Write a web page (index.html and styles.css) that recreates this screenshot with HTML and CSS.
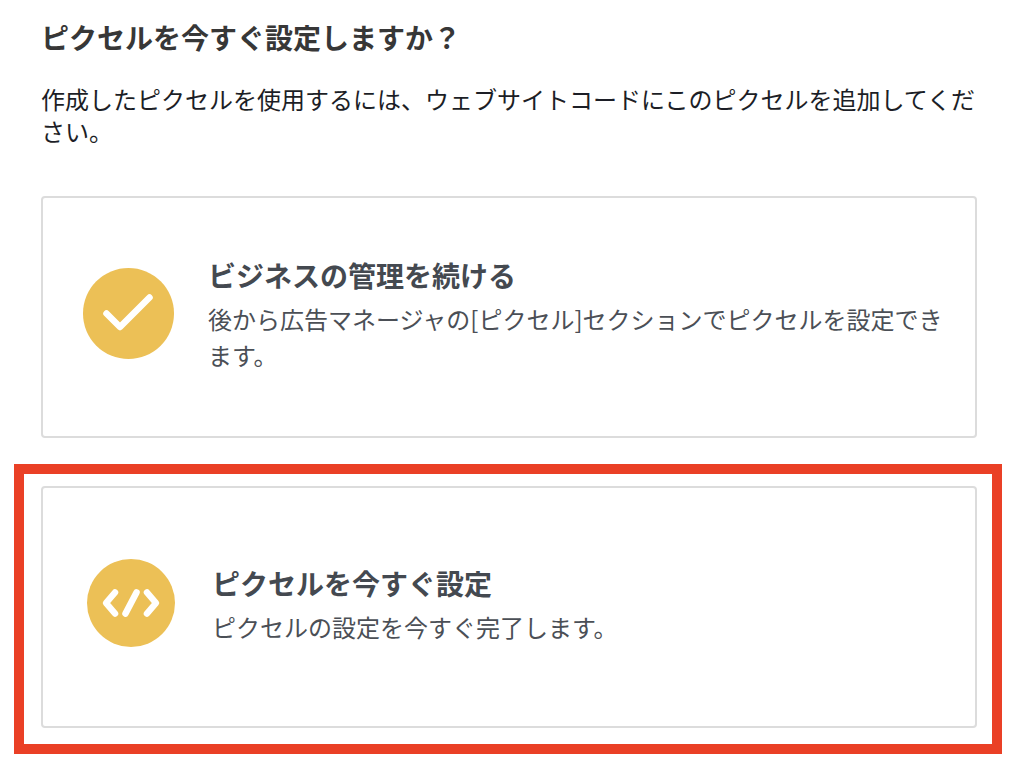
FILE: index.html
```html
<!DOCTYPE html>
<html lang="ja">
	<head>
		<meta charset="utf-8">
		<meta name="viewport" content="width=device-width, initial-scale=1">
		<title>ピクセルを今すぐ設定しますか？</title>
		<link rel="stylesheet" href="styles.css">
	</head>
	<body>
		<main class="setup">
			<h1 class="title">ピクセルを今すぐ設定しますか？</h1>
			<p class="lead">作成したピクセルを使用するには、ウェブサイトコードにこのピクセルを追加してください。</p>

			<button type="button" class="option">
				<svg class="icon" viewBox="0 0 91 91" aria-hidden="true">
					<circle cx="45.5" cy="45.5" r="45.5"/>
					<path d="M23.5 45.5L37 59L66.5 29.5"/>
				</svg>
				<span class="text">
					<span class="name">ビジネスの管理を続ける</span>
					<span class="desc">後から広告マネージャの[ピクセル]セクションでピクセルを設定できます。</span>
				</span>
			</button>

			<div class="highlight">
				<button type="button" class="option code">
					<svg class="icon" viewBox="0 0 88 88" aria-hidden="true">
						<circle cx="44" cy="44" r="44"/>
						<path d="M28 33.500L19 44L28 54.500M49.500 33.500L38.500 54.500M60 33.500L69 44L60 54.500"/>
					</svg>
					<span class="text">
						<span class="name">ピクセルを今すぐ設定</span>
						<span class="desc">ピクセルの設定を今すぐ完了します。</span>
					</span>
				</button>
			</div>
		</main>
	</body>
</html>
```
FILE: styles.css
```css
* {
	box-sizing: border-box;
}
body {
	margin: 0;
	background-color: #fff;
	color: #1c1e26;
	font-family: "Noto Sans CJK JP", sans-serif;
	font-size: 24px;
}
.setup {
	padding: 17px 55px 22px 41px;
}
.title {
	margin: 0;
	font-size: 28px;
	line-height: 40px;
	color: #373737;
}
.lead {
	margin: 26px 0 49px;
	line-height: 32px;
}
.option {
	display: flex;
	align-items: center;
	gap: 34px;
	width: 100%;
	min-height: 242px;
	padding: 32px 32px 32px 40px;
	background-color: #fff;
	border: 2px solid #dcdcdc;
	border-radius: 4px;
	color: #4b4f56;
	font: inherit;
	text-align: left;
	cursor: pointer;
}
.icon {
	flex: none;
	width: 91px;
	margin-bottom: 8px;
}
.icon circle {
	fill: #ecc056;
}
.icon path {
	fill: none;
	stroke: #fff;
	stroke-width: 6.5;
	stroke-linecap: round;
	stroke-linejoin: round;
}
.text {
	padding-bottom: 6px;
}
.name,
.desc {
	display: block;
}
.name {
	margin-bottom: 6px;
	font-size: 28px;
	font-weight: bold;
	line-height: 40px;
	color: #444950;
}
.desc {
	line-height: 36px;
}

/* red frame round the recommended choice */
.highlight {
	margin: 26px -25px 0 -27px;
	padding: 12px 15px 16px 17px;
	border: 10px solid #ea4026;
}
.code {
	gap: 37px;
	padding-left: 44px;
}
.code .icon {
	width: 88px;
}
```
